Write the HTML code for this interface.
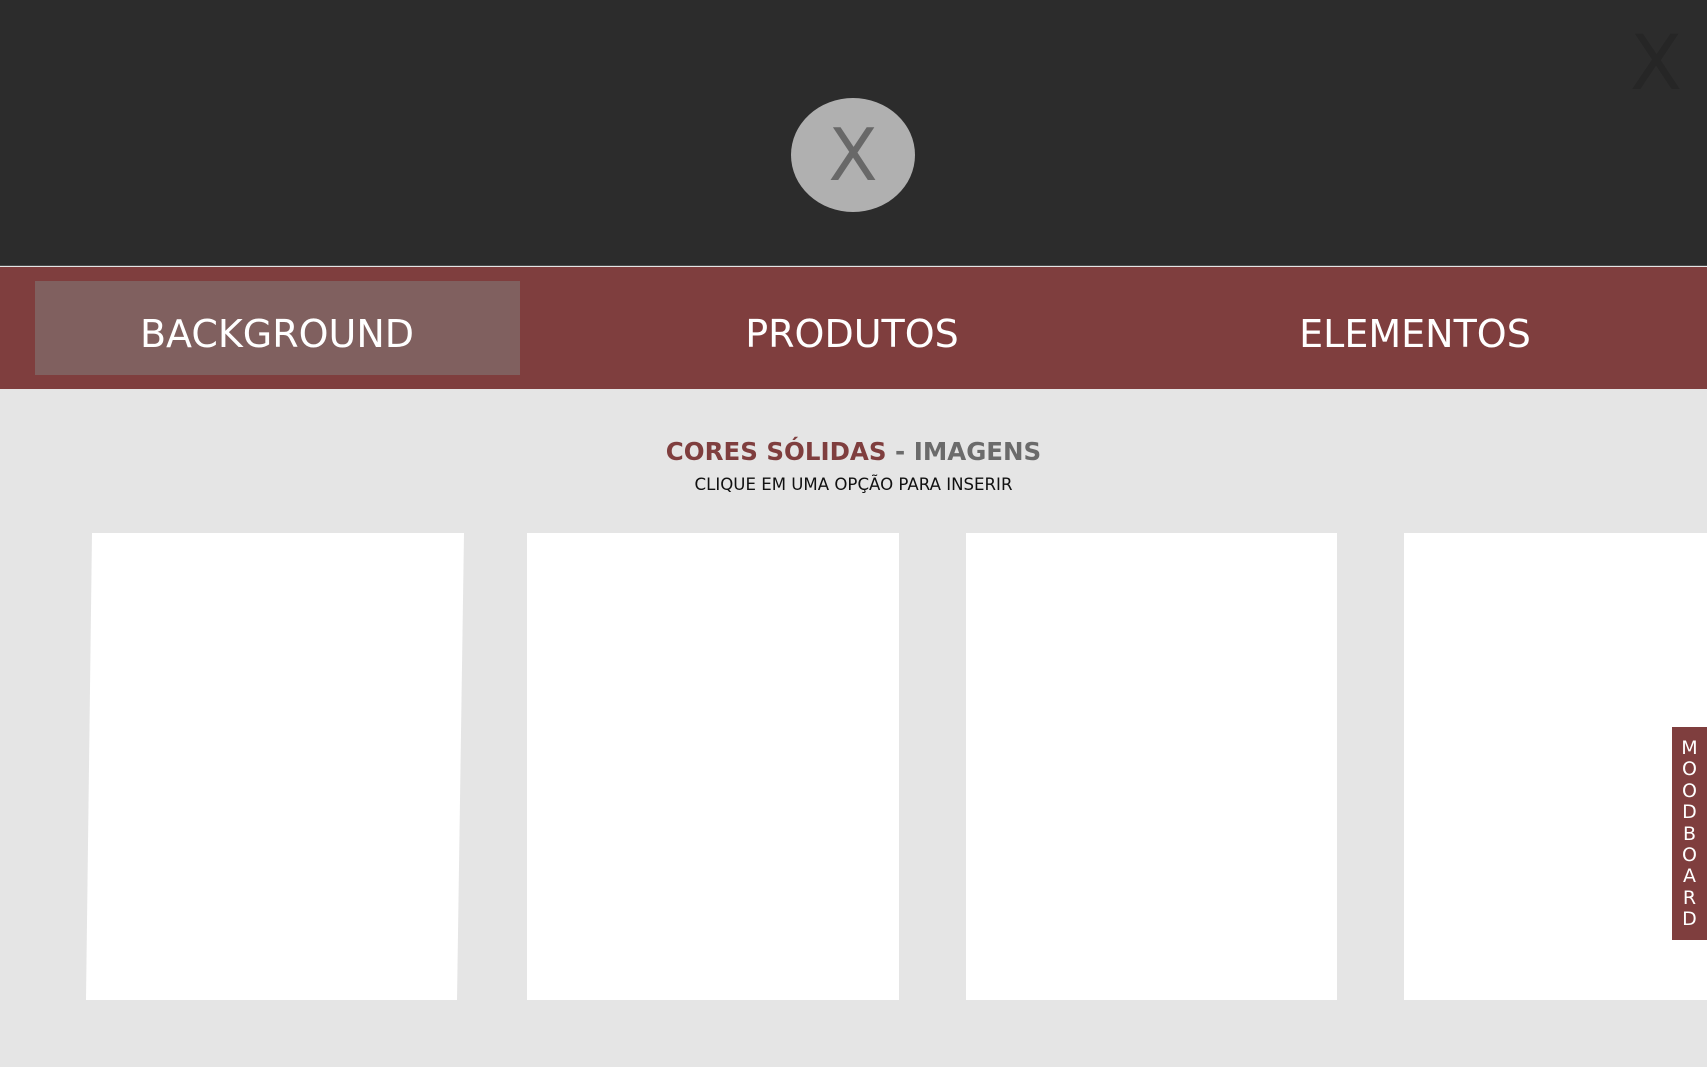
<!DOCTYPE html>
<html><head><meta charset="utf-8"><style>
*{margin:0;padding:0;box-sizing:border-box}
body{width:1707px;height:1067px;overflow:hidden;background:#e5e5e5;font-family:"DejaVu Sans","Liberation Sans",sans-serif;position:relative}
.hdr{position:absolute;left:0;top:0;width:1707px;height:266px;background:#2c2c2c;border-bottom:1px solid #4a4a4a}
.circ{position:absolute;left:791px;top:98px;width:124px;height:114px;border-radius:50%;background:#b0b0b0;color:#686868;font-size:72px;line-height:114px;text-align:center}
.cx{position:absolute;left:1630px;top:18px;color:#262626;font-size:76px;line-height:90px}
.nav{position:absolute;left:0;top:267px;width:1707px;height:122px;background:#7f3e3e}
.act{position:absolute;left:35px;top:14px;width:485px;height:94px;background:#80605f}
.t{position:absolute;top:0;height:122px;line-height:134px;color:#fff;font-size:38px;transform:translateX(-50%);white-space:nowrap}
.title{position:absolute;left:0;width:1707px;top:437px;text-align:center;font-weight:bold;font-size:24.5px;color:#6b6b6b}
.sub{position:absolute;left:0;width:1707px;top:475px;text-align:center;font-size:16.6px;color:#111}
.card{position:absolute;top:533px;height:467px;background:#fff}
.mb{position:absolute;left:1672px;top:727px;width:35px;height:213px;background:#7f3e3e;color:#fff;font-size:19px;line-height:21.4px;text-align:center;padding-top:11px}
</style></head><body>
<div class="hdr"><div class="circ">X</div><div class="cx">X</div></div>
<div class="nav"><div class="act"></div>
<div class="t" style="left:277px">BACKGROUND</div>
<div class="t" style="left:852px">PRODUTOS</div>
<div class="t" style="left:1415px">ELEMENTOS</div></div>
<div class="title"><span style="color:#7f3e3e">CORES SÓLIDAS</span> - IMAGENS</div>
<div class="sub">CLIQUE EM UMA OPÇÃO PARA INSERIR</div>
<svg style="position:absolute;left:0;top:0" width="1707" height="1067"><polygon points="92,533 464,533 457,1000 86,1000" fill="#fff"/></svg>
<div class="card" style="left:527px;width:372px"></div>
<div class="card" style="left:966px;width:371px"></div>
<div class="card" style="left:1404px;width:303px"></div>
<div class="mb">M<br>O<br>O<br>D<br>B<br>O<br>A<br>R<br>D</div>
</body></html>
